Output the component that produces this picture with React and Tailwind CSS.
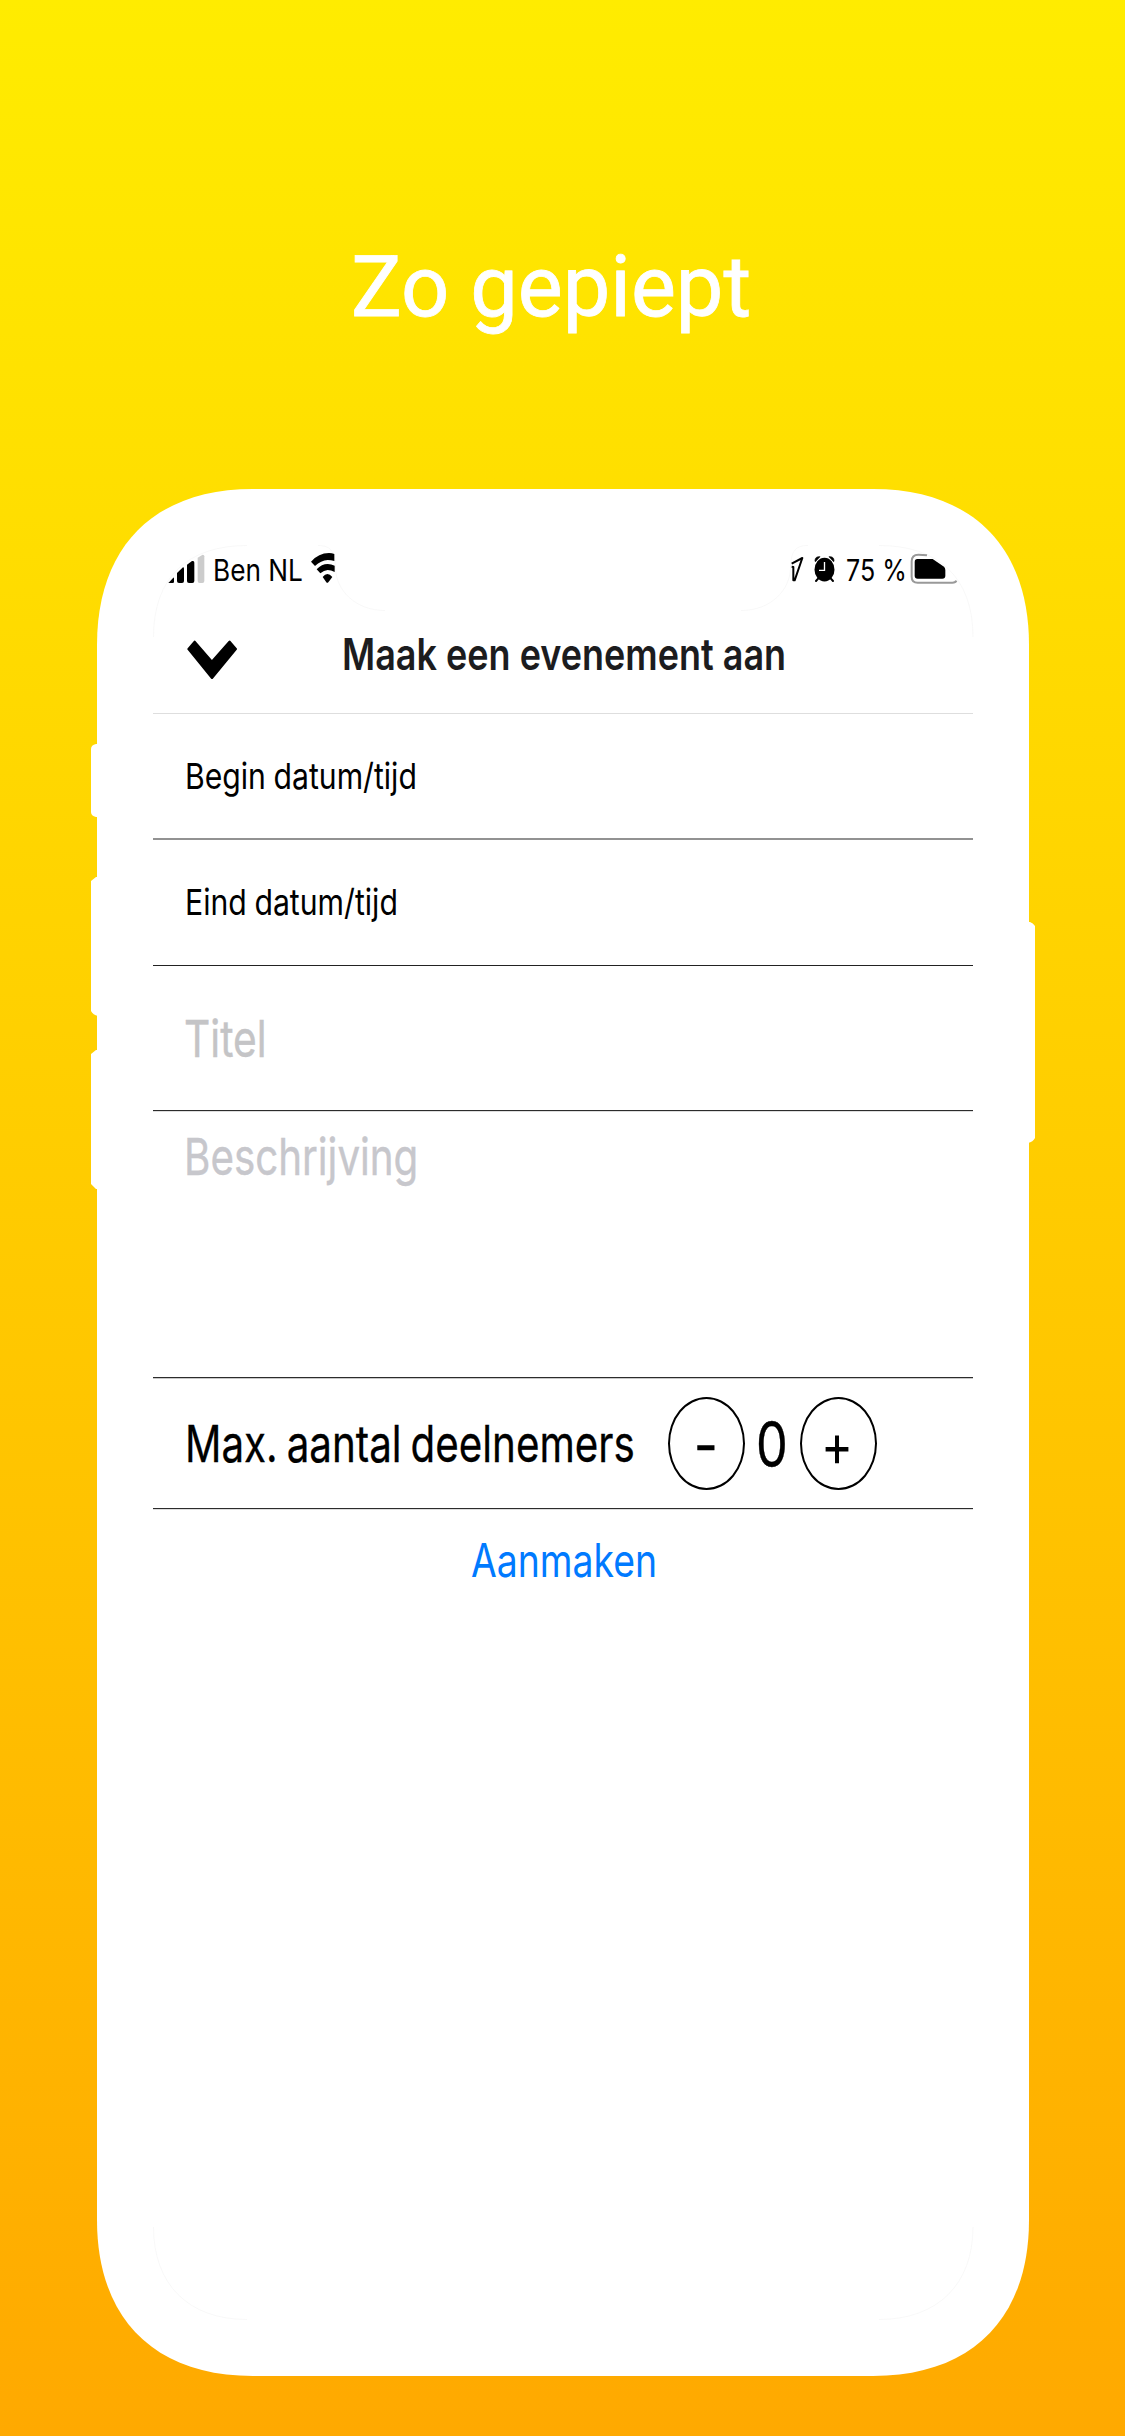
import { useLayoutEffect, useRef } from "react";

// Text condensed or widened horizontally so that it fills a given width.
function FitText({ width, className = "", children }) {
  const ref = useRef(null);
  useLayoutEffect(() => {
    const fit = () => {
      const el = ref.current;
      if (el) el.style.transform = `scaleX(${width / el.offsetWidth})`;
    };
    fit();
    document.fonts?.ready.then(fit);
  }, [width]);
  return (
    <span className="block shrink-0" style={{ width }}>
      <span ref={ref} className={`inline-block origin-left whitespace-nowrap align-top ${className}`}>
        {children}
      </span>
    </span>
  );
}

function DeviceFrame() {
  return (
    <svg className="absolute left-0 top-0" width="944" height="1887" viewBox="91 489 944 1887" fill="none">
      <g fill="#fff">
        <path d="M253 489H873C971.6 489 1029 546.4 1029 645V2220C1029 2318.6 971.6 2376 873 2376H253C154.4 2376 97 2318.6 97 2220V645C97 546.4 154.4 489 253 489Z" />
        <path d="M98 744H96Q91 745 91 749V812Q91 816 96 817H98ZM98 877H96L91 881V1011Q93 1015 98 1016ZM98 1050H96L91 1054V1184L96 1189H98ZM1028 922H1030Q1033 923 1035 926V1138Q1033 1142 1028 1143Z" />
      </g>
      <g stroke="#f4f4f4" strokeWidth="0.6">
        <path d="M153.500 637C153.500 577 188 545.500 247 545.500M318 545.500C332 545.500 335 553 335.500 568C336 590 355 610.500 385 610.500" />
        <path d="M973 637C973 577 938 545.500 879 545.500M808 545.500C794 545.500 791 553 790.500 568C790 590 771 610.500 741 610.500" />
        <path d="M153.500 2227C153.500 2284 188 2319.500 247 2319.500M973 2227C973 2284 938 2319.500 879 2319.500" />
      </g>
    </svg>
  );
}

function Signal() {
  return (
    <svg width="38" height="32" viewBox="263 246 114 96">
      <path d="M264 339L279 323Q281 322 281 326V336Q281 339 277 339Z" />
      <path d="M290 309L308 292Q311 292 311 296V333Q311 339 305 339H296Q290 339 290 333Z" />
      <path d="M320 284L335 273H338Q342 273 342 278V333Q342 339 336 339H326Q320 339 320 333Z" />
      <path d="M352 263L367 254Q372 254 372 259V333Q372 339 366 339H358Q352 339 352 333Z" fill="#ccc" />
    </svg>
  );
}

function Wifi() {
  return (
    <svg width="25" height="32" viewBox="693 246 75 96">
      <path d="M696 275Q719 249 750 249Q759 249 766 252V273Q756 270 746 270Q726 271 708 288Z" />
      <path d="M713 298Q728 282 746 282Q757 282 767 287V306Q756 300 746 300Q735 301 724 310Z" />
      <path d="M731 321Q745 303 760 321L748 337Q745 340 742 337Z" />
    </svg>
  );
}

function LocationArrow() {
  return (
    <svg width="13" height="32" viewBox="153 246 39 96" fill="none" stroke="#000" strokeWidth="6" strokeLinejoin="round">
      <path d="M155 281L187 264L164 331H160V291L155 290" />
    </svg>
  );
}

function Alarm() {
  return (
    <svg width="21" height="32" viewBox="223 246 63 96">
      <ellipse cx="254.500" cy="299" rx="30" ry="35.500" />
      <path d="M226 272Q226 259 241 260L227 275ZM283 272Q283 259 268 260L282 275Z" stroke="#000" strokeWidth="2" />
      <path d="M236 325L229 333M273 325L280 333" stroke="#000" strokeWidth="6" strokeLinecap="round" />
      <path d="M254.500 276V301H238" fill="none" stroke="#fff" strokeWidth="4" />
    </svg>
  );
}

function Battery() {
  return (
    <svg width="48" height="32" viewBox="511 246 144 96">
      <path d="M562 256Q550 254 536 254Q516 254 516 274V320Q516 338 534 338H638Q648 338 650 332" fill="none" stroke="#999" strokeWidth="6" />
      <path d="M533 267H579L613 290Q617 294 617 300V317Q617 326 608 326H534Q525 326 525 317V276Q525 267 533 267Z" />
    </svg>
  );
}

function Chevron() {
  return (
    <svg width="50" height="40" viewBox="322 511 150 120">
      <path d="M345 517L397 577L450 517L468 538L397 624L327 538Z" stroke="#000" strokeWidth="8" strokeLinejoin="round" />
    </svg>
  );
}

export default function App() {
  return (
    <main className="flex h-[2436px] w-[1125px] flex-col bg-linear-to-b from-[#ffec00] to-[#ffa900] font-['Inter',sans-serif] text-black">
      <h1 className="flex h-[489px] shrink-0 items-start pl-[351px] pt-[237px] font-['Roboto',sans-serif] font-normal text-white">
        <FitText width={400} className="text-[86px] leading-[100px] [-webkit-text-stroke:0.8px_white]">Zo gepiept</FitText>
      </h1>

      <section className="relative ml-[91px] h-[1887px] w-[944px]">
        <DeviceFrame />
        <div className="relative ml-[62px] flex w-[820px] flex-col pt-[63px]">
          <div className="flex h-8 items-center justify-between pl-[15px]">
            <div className="flex items-center">
              <Signal />
              <div className="ml-[7px] mt-[4px]">
                <FitText width={90} className="text-[30px] leading-8">Ben NL</FitText>
              </div>
              <div className="ml-[7px]"><Wifi /></div>
            </div>
            <div className="flex items-center pr-[15px]">
              <LocationArrow />
              <div className="ml-[10px]"><Alarm /></div>
              <div className="ml-[11px] mt-[4px]">
                <FitText width={61} className="text-[30px] leading-8">75 %</FitText>
              </div>
              <div className="ml-[3px]"><Battery /></div>
            </div>
          </div>

          <header className="flex h-[130px] items-start border-b border-[#dedede] pt-[40px]">
            <button className="ml-[34px] mt-[16px]"><Chevron /></button>
            <h2 className="ml-[105px] font-semibold text-[#1c1c1e]">
              <FitText width={444} className="text-[44px] leading-[60px]">Maak een evenement aan</FitText>
            </h2>
          </header>

          <div className="flex h-[126px] items-center border-b-2 border-[#929292] pb-px pl-[32px]">
            <FitText width={232} className="text-[36px] leading-[50px] [word-spacing:-1px]">Begin datum/tijd</FitText>
          </div>
          <div className="flex h-[126px] items-center border-b border-[#222] pb-px pl-[32px]">
            <FitText width={213} className="text-[36px] leading-[50px] [word-spacing:-1px]">Eind datum/tijd</FitText>
          </div>
          <div className="flex h-[145px] items-center border-b border-[#2c2c2c] pl-[31px] pt-[2px] text-[#c4c4c6] shadow-[0_1px_0_#dddddd]">
            <FitText width={83} className="text-[51px] leading-[60px] [-webkit-text-stroke:0.4px_#c4c4c6]">Titel</FitText>
          </div>
          <div className="flex h-[267px] items-start border-b border-[#2c2c2c] pl-[31px] pt-[16px] text-[#c7c7cc] shadow-[0_1px_0_#c8c8c8]">
            <FitText width={234} className="text-[51px] leading-[60px] [-webkit-text-stroke:0.4px_#c7c7cc]">Beschrijving</FitText>
          </div>
          <div className="flex h-[131px] items-center border-b border-[#2c2c2c] pl-[32px] pt-px shadow-[0_1px_0_#dddddd]">
            <FitText width={450} className="text-[51px] leading-[60px] [word-spacing:-3px] [-webkit-text-stroke:0.3px_black]">Max. aantal deelnemers</FitText>
            <button className="ml-[33px] flex h-[93px] w-[77px] items-center justify-center rounded-[50%] border-2 border-black pr-[2px] pt-[3px]">
              <FitText width={24} className="text-[56px] leading-[60px] [-webkit-text-stroke:0.6px_black]">-</FitText>
            </button>
            <div className="ml-[11px]">
              <FitText width={32} className="text-[63px] leading-[70px] [-webkit-text-stroke:0.4px_black]">0</FitText>
            </div>
            <button className="ml-[12px] flex h-[93px] w-[77px] items-center justify-center rounded-[50%] border-2 border-black pr-[3px] pt-[3px]">
              <FitText width={32} className="text-[59px] leading-[60px]">+</FitText>
            </button>
          </div>
          <button className="mt-[21px] flex pl-[318px] text-[#007aff]">
            <FitText width={186} className="text-[46px] leading-[60px]">Aanmaken</FitText>
          </button>
        </div>
      </section>
    </main>
  );
}
